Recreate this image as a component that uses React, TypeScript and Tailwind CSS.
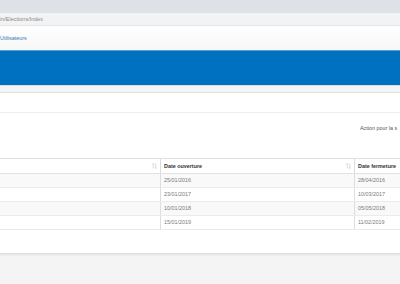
import React from "react";

const rows = [
  { open: "25/01/2016", close: "28/04/2016" },
  { open: "23/01/2017", close: "10/03/2017" },
  { open: "10/01/2018", close: "05/05/2018" },
  { open: "15/01/2019", close: "11/02/2019" },
];

function SortIcon() {
  return (
    <svg width="5" height="6" viewBox="0 0 5 6" className="text-[#cfcfcf]">
      <path d="M1.2 0.5 V5.5 M0.2 1.5 L1.2 0.5 L2.2 1.5" stroke="currentColor" strokeWidth="0.7" fill="none" />
      <path d="M3.8 0.5 V5.5 M2.8 4.5 L3.8 5.5 L4.8 4.5" stroke="currentColor" strokeWidth="0.7" fill="none" />
    </svg>
  );
}

export default function App() {
  return (
    <div className="h-[284px] w-[400px] overflow-hidden bg-[#f4f4f4] font-['Liberation_Sans',Arial,sans-serif]">
      {/* browser chrome */}
      <div className="h-[13px] bg-[#dee1e5]" />
      <div className="flex h-[13px] items-center border-b border-[#e4e6e8] bg-[#f1f3f4] text-[5.5px] text-[#8a8a8a]">
        in/Elections/Index
      </div>
      {/* nav */}
      <div className="flex h-[24px] items-center bg-gradient-to-b from-white to-[#f7f7f7] text-[5.4px] text-[#337ab7]">
        Utilisateurs
      </div>
      {/* banner */}
      <div className="h-[35px] border-t border-[#5b9bd5] bg-[#0070c0]" />
      <div className="h-[8px] border-t border-[#dcdcdc] border-b border-b-[#e2e2e2] bg-[#f5f5f5]" />

      {/* content */}
      <div className="h-[161px] border-b border-[#dedede] bg-white shadow-[0_1px_2px_rgba(0,0,0,0.08)]">
        <div className="h-[20px] border-b border-[#eeeeee]" />
        <div className="flex h-[45px] justify-end pt-[11px] text-[5.4px] text-[#555]">
          <span className="w-[40px] overflow-hidden whitespace-nowrap">Action pour la s</span>
        </div>

        <div className="w-[460px] text-[5.4px]">
          <div className="grid h-[16px] grid-cols-[160px_194px_106px] border-t border-b border-[#e2e2e2] font-bold text-[#333]">
            <div className="flex items-center justify-end pr-[3px]">
              <SortIcon />
            </div>
            <div className="flex items-center justify-between border-l border-[#dddddd] pl-[3px] pr-[3px]">
              <span>Date ouverture</span>
              <SortIcon />
            </div>
            <div className="flex items-center border-l border-[#dddddd] pl-[3px]">Date fermeture</div>
          </div>
          {rows.map((r, i) => (
            <div
              key={r.open}
              className={
                "grid h-[14px] grid-cols-[160px_194px_106px] border-b border-[#ebebeb] text-[#7a7a7a] " +
                (i % 2 === 0 ? "bg-[#f9f9f9]" : "bg-white")
              }
            >
              <div />
              <div className="flex items-center border-l border-[#dddddd] pl-[3px]">{r.open}</div>
              <div className="flex items-center border-l border-[#dddddd] pl-[3px]">{r.close}</div>
            </div>
          ))}
        </div>
      </div>
    </div>
  );
}
